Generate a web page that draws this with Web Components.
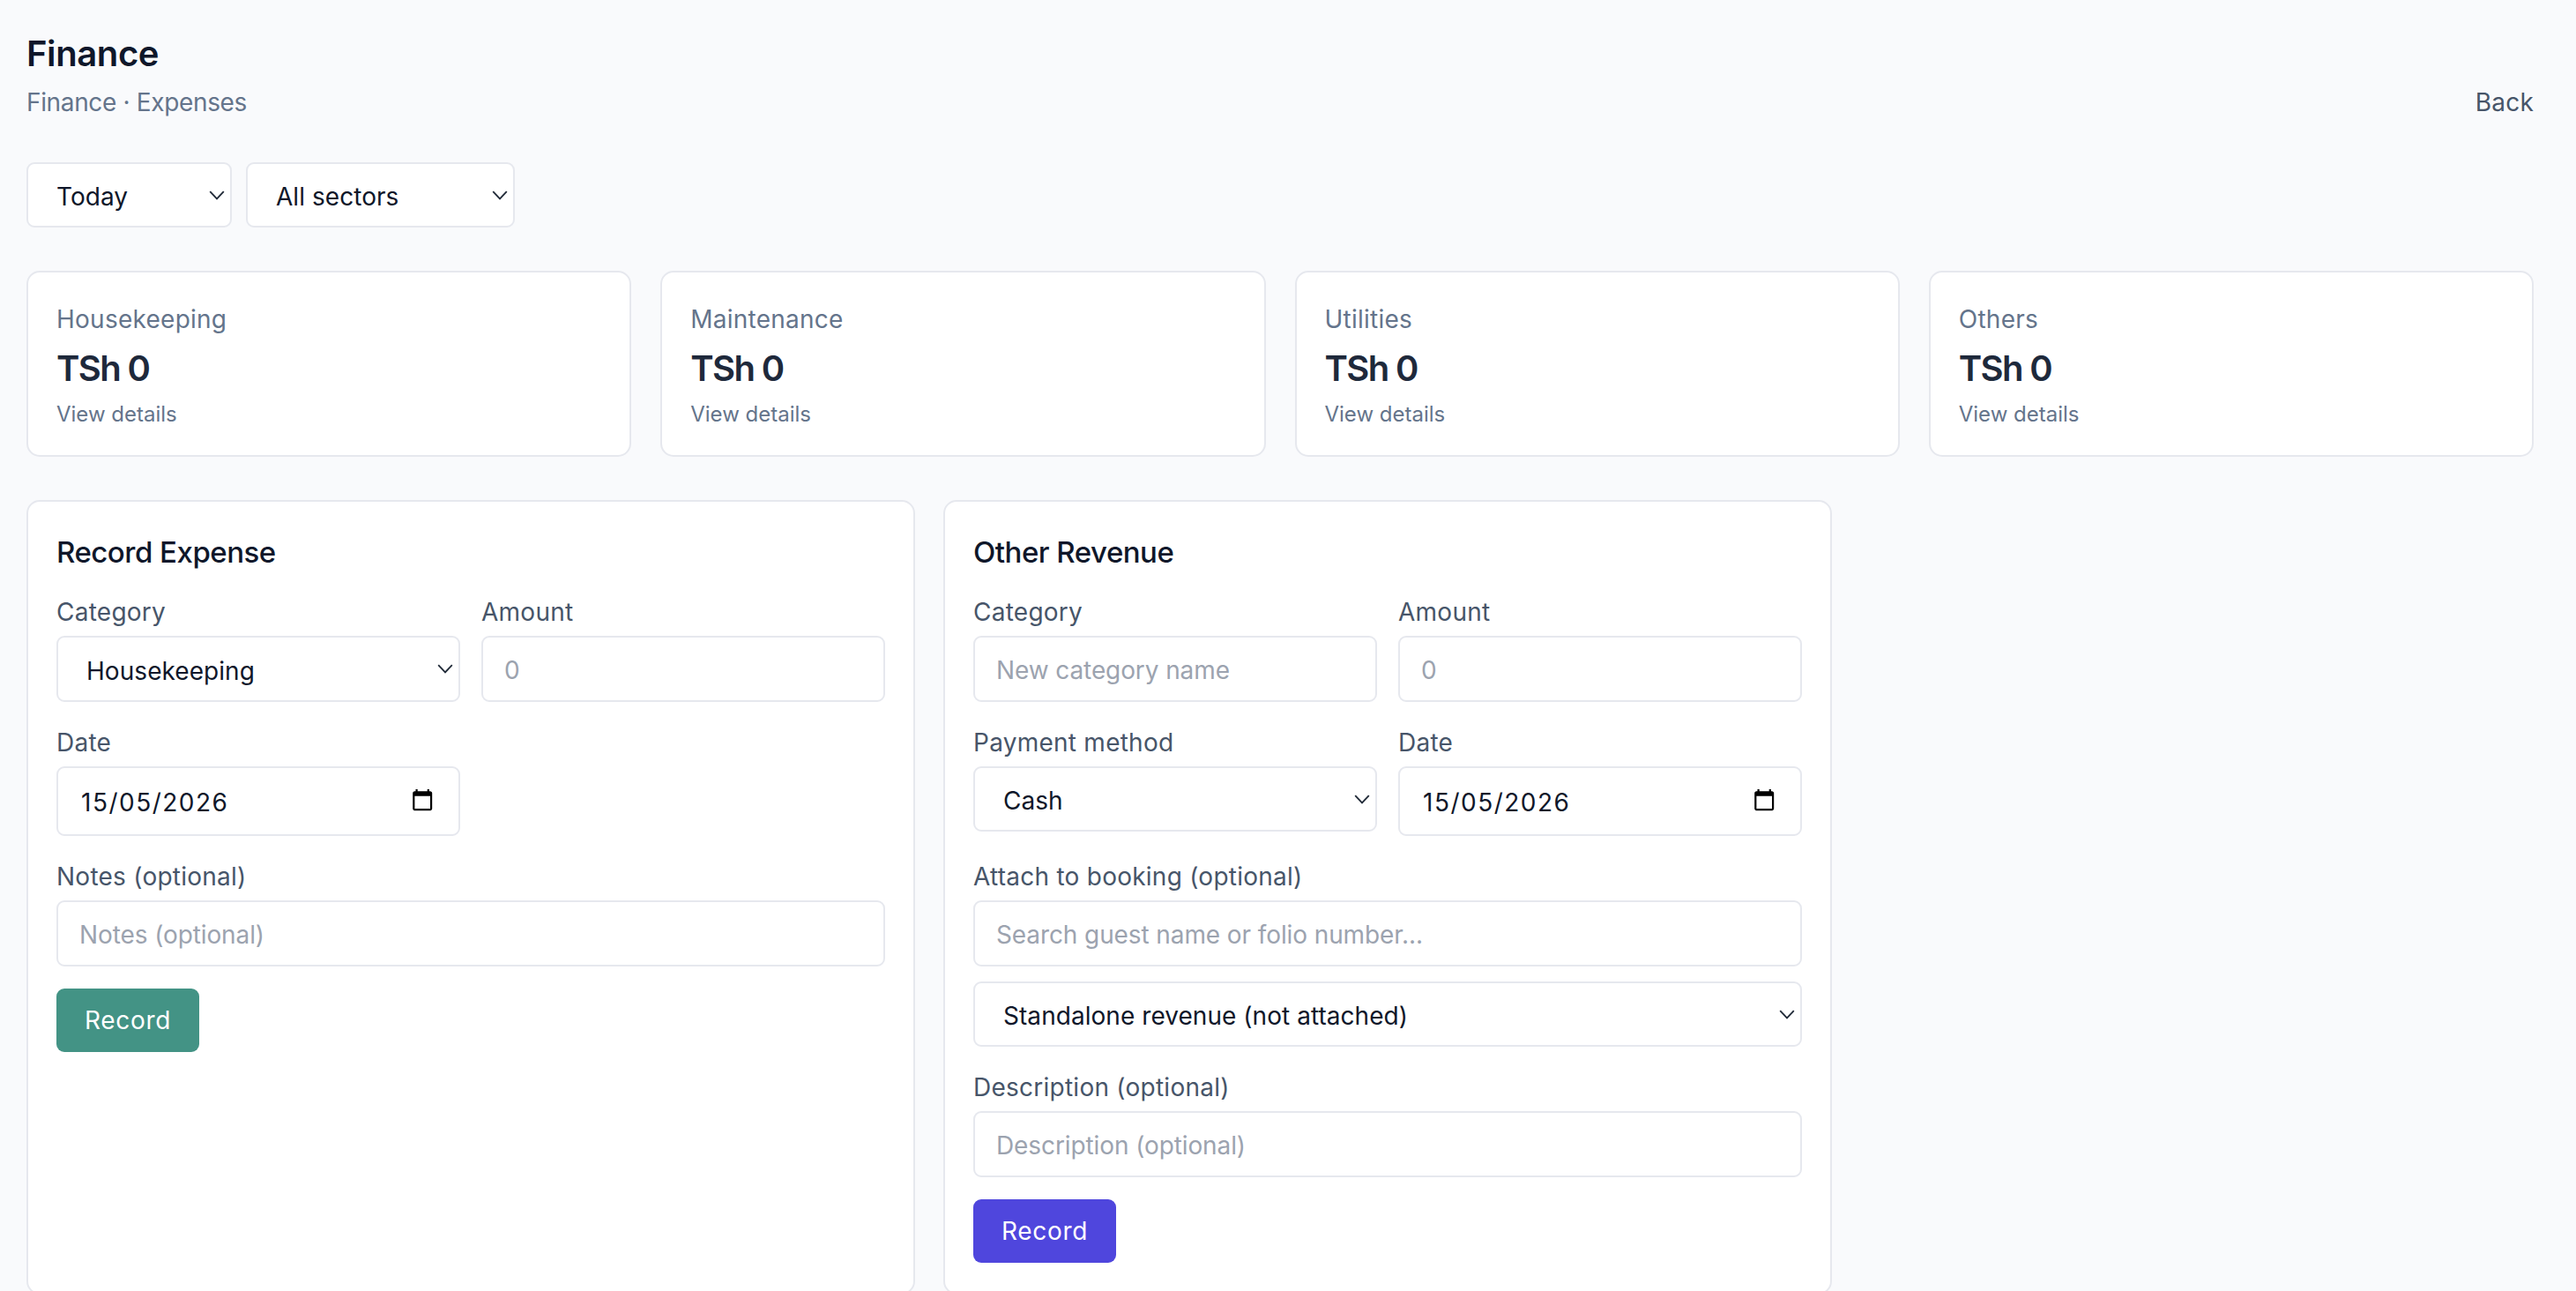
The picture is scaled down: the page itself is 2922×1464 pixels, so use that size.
<!DOCTYPE html>
<html lang="en">
<head>
<meta charset="utf-8">
<title>Finance</title>
<style>
html,body{margin:0;height:1464px;overflow:hidden;background:#f9fafc}
body{font-family:Inter,"Liberation Sans",sans-serif;color:#0f172a;font-size:28px}
</style>
</head>
<body>
<finance-page>
  <page-header slot="header" title="Finance" subtitle="Finance · Expenses" back="Back"></page-header>
  <div slot="filters" style="display:contents">
    <ui-select width="233">Today</ui-select>
    <ui-select width="305">All sectors</ui-select>
  </div>
  <stat-card slot="stats" label="Housekeeping" value="TSh 0" link="View details"></stat-card>
  <stat-card slot="stats" label="Maintenance" value="TSh 0" link="View details"></stat-card>
  <stat-card slot="stats" label="Utilities" value="TSh 0" link="View details"></stat-card>
  <stat-card slot="stats" label="Others" value="TSh 0" link="View details"></stat-card>

  <form-card slot="forms" heading="Record Expense">
    <form-row>
      <form-field label="Category"><ui-select style="height:75px">Housekeeping</ui-select></form-field>
      <form-field label="Amount"><text-input placeholder="0"></text-input></form-field>
    </form-row>
    <form-row>
      <form-field label="Date"><date-input value="15/05/2026"></date-input></form-field>
    </form-row>
    <form-field label="Notes (optional)"><text-input placeholder="Notes (optional)"></text-input></form-field>
    <ui-button tone="teal">Record</ui-button>
  </form-card>

  <form-card slot="forms" heading="Other Revenue">
    <form-row>
      <form-field label="Category"><text-input placeholder="New category name"></text-input></form-field>
      <form-field label="Amount"><text-input placeholder="0"></text-input></form-field>
    </form-row>
    <form-row>
      <form-field label="Payment method"><ui-select>Cash</ui-select></form-field>
      <form-field label="Date"><date-input value="15/05/2026"></date-input></form-field>
    </form-row>
    <form-field label="Attach to booking (optional)">
      <text-input placeholder="Search guest name or folio number..."></text-input>
      <ui-select style="margin-top:17px">Standalone revenue (not attached)</ui-select>
    </form-field>
    <form-field label="Description (optional)"><text-input placeholder="Description (optional)"></text-input></form-field>
    <ui-button tone="indigo">Record</ui-button>
  </form-card>
</finance-page>

<script>
const tpl = html => { const t = document.createElement('template'); t.innerHTML = html; return t; };
class Base extends HTMLElement {
  mount(t){ if(!this.shadowRoot){ this.attachShadow({mode:'open'}).appendChild(t.content.cloneNode(true)); } return this.shadowRoot; }
}

const pageT = tpl(`<style>
:host{display:block;box-sizing:border-box;padding:33px 48px 0 30px}
.filters{display:flex;gap:16px;margin-top:48px}
.stats{display:grid;grid-template-columns:repeat(4,1fr);gap:33px;margin-top:49px}
.forms{display:grid;grid-template-columns:1008px 1008px;gap:32px;margin-top:49.5px}
</style>
<slot name="header"></slot>
<div class="filters"><slot name="filters"></slot></div>
<div class="stats"><slot name="stats"></slot></div>
<div class="forms"><slot name="forms"></slot></div>`);
customElements.define('finance-page', class extends Base { connectedCallback(){ this.mount(pageT); } });

const headT = tpl(`<style>
:host{display:flex;justify-content:space-between;align-items:flex-end}
h1{margin:0;font-size:40px;line-height:56px;font-weight:600;letter-spacing:-.4px;color:#0f172a}
p{margin:7px 0 0;font-size:28px;line-height:40px;color:#64748b;letter-spacing:-.35px}
a{font-size:28px;line-height:40px;color:#475569;text-decoration:none;letter-spacing:.2px}
</style>
<div><h1></h1><p></p></div><a href="#"></a>`);
customElements.define('page-header', class extends Base { connectedCallback(){
  const r=this.mount(headT);
  r.querySelector('h1').textContent=this.getAttribute('title');
  r.querySelector('p').textContent=this.getAttribute('subtitle');
  r.querySelector('a').textContent=this.getAttribute('back');
}});

const selT = tpl(`<style>
:host{display:flex;align-items:center;box-sizing:border-box;height:74px;background:#fff;border:2px solid #e6e8ee;border-radius:9px;padding:0 6px 0 32px;font-size:28px;letter-spacing:.05px;color:#0f172a}
span{flex:1;white-space:nowrap;padding-top:4px}
svg{flex:none;display:block}
</style>
<span><slot></slot></span>
<svg width="18" height="11" viewBox="0 0 18 11" fill="none" stroke="#1f2937" stroke-width="1.8"><path d="M1.2 1.2 9 9.4 16.8 1.2"/></svg>`);
customElements.define('ui-select', class extends Base { connectedCallback(){
  this.mount(selT);
  const w=this.getAttribute('width'); if(w) this.style.width=w+'px';
}});

const statT = tpl(`<style>
:host{display:block;box-sizing:border-box;height:210.5px;background:#fff;border:2px solid #e6e8ee;border-radius:15px;padding:33.5px 32px 0}
.l{font-size:28px;line-height:38px;color:#64748b;letter-spacing:.25px}
.v{margin-top:12px;font-size:40px;line-height:50px;font-weight:600;color:#1e293b;letter-spacing:-1.6px}
.a{margin-top:9px;font-size:24px;line-height:36px;color:#64748b;letter-spacing:0}
</style>
<div class="l"></div><div class="v"></div><div class="a"></div>`);
customElements.define('stat-card', class extends Base { connectedCallback(){
  const r=this.mount(statT);
  r.querySelector('.l').textContent=this.getAttribute('label');
  r.querySelector('.v').textContent=this.getAttribute('value');
  r.querySelector('.a').textContent=this.getAttribute('link');
}});

const cardT = tpl(`<style>
:host{display:block;box-sizing:border-box;background:#fff;border:2px solid #e6e8ee;border-radius:15px;padding:32px 32px 34px}
h2{margin:0 0 24px;font-size:33px;line-height:50px;font-weight:500;color:#0f172a;letter-spacing:-.5px}
.body{display:flex;flex-direction:column;gap:27px}
</style>
<h2></h2><div class="body"><slot></slot></div>`);
customElements.define('form-card', class extends Base { connectedCallback(){
  this.mount(cardT).querySelector('h2').textContent=this.getAttribute('heading');
}});

const rowT = tpl(`<style>:host{display:grid;grid-template-columns:458px 458px;gap:24px;align-items:start}</style><slot></slot>`);
customElements.define('form-row', class extends Base { connectedCallback(){ this.mount(rowT); } });

const fieldT = tpl(`<style>
:host{display:block}
label{display:block;font-size:28px;line-height:37px;padding-top:1px;margin-bottom:8px;color:#475569;letter-spacing:.25px}
</style>
<label></label><slot></slot>`);
customElements.define('form-field', class extends Base { connectedCallback(){
  this.mount(fieldT).querySelector('label').textContent=this.getAttribute('label');
}});

const inputT = tpl(`<style>
:host{display:block}
input{display:block;box-sizing:border-box;width:100%;height:75px;background:#fff;border:2px solid #e6e8ee;border-radius:9px;padding:2px 24px 0;margin:0;outline:0;font:28px Inter,"Liberation Sans",sans-serif;letter-spacing:-.1px;color:#0f172a}
input::placeholder{color:#9ca3af;opacity:1}
</style>
<input type="text">`);
customElements.define('text-input', class extends Base { connectedCallback(){
  this.mount(inputT).querySelector('input').placeholder=this.getAttribute('placeholder')||'';
}});

const dateT = tpl(`<style>
:host{display:flex;align-items:center;box-sizing:border-box;height:79px;background:#fff;border:2px solid #e6e8ee;border-radius:9px;padding:0 28px 0 26px;font-size:28px;letter-spacing:1.5px;color:#0f172a}
span{flex:1;padding-top:2px}
svg{flex:none;display:block;margin-top:-2px}
</style>
<span></span>
<svg width="26.4" height="26.4" viewBox="0 0 24 24" fill="#000"><path d="M20 3h-1V1h-2v2H7V1H5v2H4c-1.1 0-2 .9-2 2v16c0 1.1.9 2 2 2h16c1.1 0 2-.9 2-2V5c0-1.1-.9-2-2-2zm0 18H4V8h16v13z"/></svg>`);
customElements.define('date-input', class extends Base { connectedCallback(){
  this.mount(dateT).querySelector('span').textContent=this.getAttribute('value');
}});

const btnT = tpl(`<style>
:host{display:block;align-self:flex-start;margin-top:-2px}
button{display:block;box-sizing:border-box;width:162px;height:72px;border:0;border-radius:9px;padding:0;font:400 28px Inter,"Liberation Sans",sans-serif;letter-spacing:.7px;color:#fff;background:var(--bg)}
:host([tone=teal]){--bg:#439385}
:host([tone=indigo]){--bg:#4f46dd}
</style>
<button type="button"><slot></slot></button>`);
customElements.define('ui-button', class extends Base { connectedCallback(){ this.mount(btnT); } });
</script>
</body>
</html>
